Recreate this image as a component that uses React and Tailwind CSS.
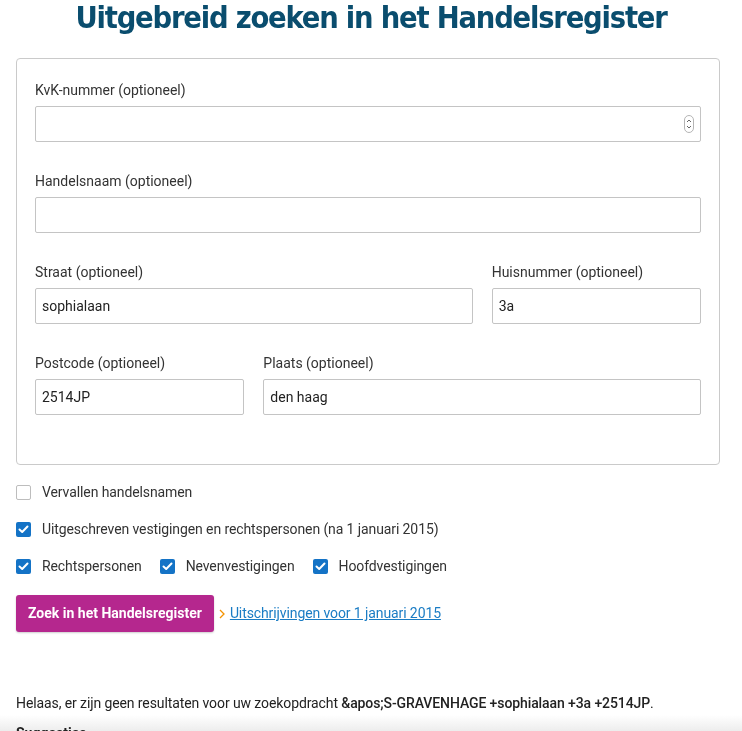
import { useState } from 'react';

const Field = ({ label, value = '', spinner = false, className = '' }) => (
    <div className={className}>
        <label className="block text-[14px] leading-5 text-[#333] mb-[6px]">{label}</label>
        <div className="relative">
            <input
                type="text"
                defaultValue={value}
                className="block w-full h-9 px-[6px] border border-[#c4c4c4] rounded-[2px] bg-white text-[14px] text-[#222] outline-none"
            />
            {spinner && (
                <div className="absolute right-[7px] top-[9px] w-[10px] h-[18px] border border-[#b5b5b5] rounded-full flex flex-col items-center justify-center">
                    <svg width="6" height="14" viewBox="0 0 6 14" fill="none" stroke="#666" strokeWidth="1">
                        <path d="M1 5 L3 3 L5 5" />
                        <path d="M1 9 L3 11 L5 9" />
                    </svg>
                </div>
            )}
        </div>
    </div>
);

const Check = ({ checked, label, onChange }) => (
    <label className="flex items-center cursor-pointer">
        <span
            onClick={onChange}
            className={`w-[15px] h-[15px] rounded-[2px] flex items-center justify-center ${checked ? 'bg-[#1473c6]' : 'bg-white border border-[#bdbdbd]'}`}
        >
            {checked && (
                <svg width="11" height="9" viewBox="0 0 11 9" fill="none" stroke="#fff" strokeWidth="2" strokeLinecap="round" strokeLinejoin="round">
                    <path d="M1.5 4.5 L4.2 7 L9.5 1.5" />
                </svg>
            )}
        </span>
        <span className="ml-[11px] text-[14px] tracking-[-0.1px] text-[#333]">{label}</span>
    </label>
);

export default function App() {
    const [checks, setChecks] = useState({
        vervallen: false,
        uitgeschreven: true,
        rechts: true,
        neven: true,
        hoofd: true
    });
    const toggle = (k) => setChecks({ ...checks, [k]: !checks[k] });

    return (
        <div className="min-h-screen bg-white font-['Roboto','Liberation_Sans',sans-serif] relative">
            {/* bottom fade, sits behind the content */}
            <div className="fixed left-0 right-0 bottom-0 h-[16px] z-0 bg-gradient-to-b from-white to-[#ededed] pointer-events-none" />

            <div className="relative z-10 px-4">
                {/* Title */}
                <h1 className="text-center text-[#0a4d6e] font-['DejaVu_Sans_Condensed','DejaVu_Sans',sans-serif] font-bold text-[30.5px] leading-[36px] tracking-[-1.2px]">
                    Uitgebreid zoeken in het Handelsregister
                </h1>

                {/* Form panel */}
                <div className="mt-[22px] w-[704px] bg-white border border-[#cacaca] rounded-[4px] px-[18px] pt-[21px] pb-[19px]">
                    <Field label="KvK-nummer (optioneel)" spinner className="mb-[29px]" />
                    <Field label="Handelsnaam (optioneel)" className="mb-[29px]" />
                    <div className="grid grid-cols-3 gap-x-[19px] mb-[29px]">
                        <Field label="Straat (optioneel)" value="sophialaan" className="col-span-2" />
                        <Field label="Huisnummer (optioneel)" value="3a" />
                    </div>
                    <div className="grid grid-cols-3 gap-x-[19px] mb-[30px]">
                        <Field label="Postcode (optioneel)" value="2514JP" />
                        <Field label="Plaats (optioneel)" value="den haag" className="col-span-2" />
                    </div>
                </div>

                {/* Options */}
                <div className="mt-[17px] flex flex-col gap-[16px]">
                    <Check label="Vervallen handelsnamen" checked={checks.vervallen} onChange={() => toggle('vervallen')} />
                    <Check label="Uitgeschreven vestigingen en rechtspersonen (na 1 januari 2015)" checked={checks.uitgeschreven} onChange={() => toggle('uitgeschreven')} />
                    <div className="flex items-center gap-[18px]">
                        <Check label="Rechtspersonen" checked={checks.rechts} onChange={() => toggle('rechts')} />
                        <Check label="Nevenvestigingen" checked={checks.neven} onChange={() => toggle('neven')} />
                        <Check label="Hoofdvestigingen" checked={checks.hoofd} onChange={() => toggle('hoofd')} />
                    </div>
                </div>

                {/* Actions */}
                <div className="mt-[18px] flex items-center">
                    <button className="h-[37px] px-[12px] bg-[#b5278e] text-white font-bold text-[14px] rounded-[3px] shadow-[0_1px_2px_rgba(0,0,0,0.2)]">
                        Zoek in het Handelsregister
                    </button>
                    <svg className="ml-[5px] mr-[5px]" width="6" height="10" viewBox="0 0 6 10" fill="none" stroke="#f39200" strokeWidth="1.3">
                        <path d="M1 1 L5 5 L1 9" />
                    </svg>
                    <a href="#" className="text-[14px] tracking-[-0.1px] text-[#1a7cc4] underline">Uitschrijvingen voor 1 januari 2015</a>
                </div>

                {/* Results */}
                <p className="mt-[61px] text-[14px] leading-5 tracking-[-0.1px] text-[#222]">
                    Helaas, er zijn geen resultaten voor uw zoekopdracht <span className="font-medium">&amp;apos;S-GRAVENHAGE +sophialaan +3a +2514JP</span>.
                </p>
                <p className="mt-[10px] text-[14px] leading-5 font-bold text-[#222]">Suggesties</p>
            </div>
        </div>
    );
}
